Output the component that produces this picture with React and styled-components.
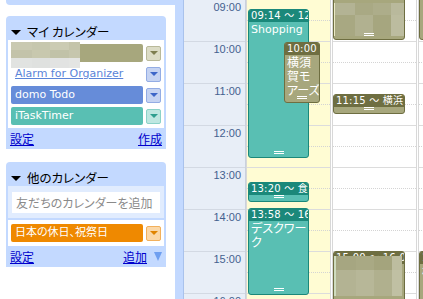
import styled, { createGlobalStyle } from "styled-components";

const GlobalStyle = createGlobalStyle`
  html, body { margin: 0; padding: 0; background: #fff; }
  body {
    width: 423px;
    height: 299px;
    overflow: hidden;
    font-family: "DejaVu Sans", "Noto Sans CJK JP", sans-serif;
    font-feature-settings: "palt";
  }
  #root { height: 299px; }
`;

const BLUE = "#c3d9ff";

const palette = {
  olive: { bar: "#a7a77d", tint: "#dcdcc6", edge: "#b9b99a", mark: "#7e7e50", dark: "#6e6e41" },
  blue: { bar: "#668cd9", tint: "#c5d3f2", edge: "#93ace4", mark: "#3d66c8", dark: "#3d66c8" },
  teal: { bar: "#59bfb3", tint: "#bfe7e1", edge: "#8bd2c8", mark: "#2f9e8f", dark: "#1b887a" },
  orange: { bar: "#ef8900", tint: "#fbd8a8", edge: "#f2b05c", mark: "#e08400", dark: "#c86e00" },
};

const Page = styled.div`
  display: flex;
  height: 299px;
  overflow: hidden;
`;

const Sidebar = styled.div`
  width: 175px;
  flex: none;
  display: flex;
  flex-direction: column;
`;

const TopCap = styled.div`
  margin-left: 6px;
  height: 5px;
  background: ${BLUE};
  border-bottom-left-radius: 4px;
`;

const Box = styled.div`
  margin: ${(p) => p.$mt}px 0 0 6px;
  width: 160px;
  background: ${BLUE};
  border-radius: 4px 4px 0 0;
`;

const BoxHead = styled.div`
  height: 24px;
  box-sizing: border-box;
  padding: 7px 0 0 5px;
  display: flex;
  align-items: center;
  gap: 6px;
  font-size: 12.5px;
  line-height: 16px;
  color: #000;
  font-family: "Noto Sans CJK JP", sans-serif;
`;

const Arrow = styled.span`
  width: 0;
  height: 0;
  border-left: 5px solid transparent;
  border-right: 5px solid transparent;
  border-top: 5px solid #000;
  margin-top: 2px;
`;

const List = styled.div`
  position: relative;
  margin: 0 2px;
  background: #fff;
  padding: 4px 3px ${(p) => p.$pb}px;
  display: flex;
  flex-direction: column;
  gap: 3px;
`;

const Row = styled.div`
  display: flex;
  align-items: center;
  gap: 3px;
  height: 18px;
`;

const Bar = styled.div`
  width: 132px;
  height: 18px;
  box-sizing: border-box;
  padding-left: 4px;
  border-radius: 2px;
  background: ${(p) => (p.$plain ? "transparent" : palette[p.$c].bar)};
  color: ${(p) => (p.$plain ? "#5b84d8" : "#fff")};
  text-decoration: ${(p) => (p.$plain ? "underline" : "none")};
  font-size: 11px;
  line-height: 18px;
  white-space: nowrap;
  overflow: hidden;
`;

const Drop = styled.div`
  width: 15px;
  height: 15px;
  box-sizing: border-box;
  border: 1px solid ${(p) => palette[p.$c].edge};
  border-radius: 2px;
  background: ${(p) => palette[p.$c].tint};
  display: flex;
  align-items: center;
  justify-content: center;

  &::after {
    content: "";
    border-left: 4px solid transparent;
    border-right: 4px solid transparent;
    border-top: 4px solid ${(p) => palette[p.$c].mark};
  }
`;

const Foot = styled.div`
  height: 21px;
  padding: 0 4px;
  display: flex;
  align-items: center;
  justify-content: space-between;
`;

const FootLink = styled.a`
  color: #0000cc;
  text-decoration: underline;
  font-size: 12px;
  font-family: "Noto Sans CJK JP", sans-serif;
  display: flex;
  align-items: center;
  gap: 7px;
`;

const MoreArrow = styled.span`
  border-left: 4px solid transparent;
  border-right: 4px solid transparent;
  border-top: 9px solid #6f9ff0;
  display: inline-block;
`;

const AddArea = styled.div`
  margin: 0 2px 2px;
  background: #e1ecfe;
  padding: 6px 4px 5px;
`;

const AddInput = styled.input`
  display: block;
  width: 100%;
  height: 21px;
  box-sizing: border-box;
  border: none;
  outline: none;
  padding: 0 4px;
  font-size: 12px;
  font-family: "Noto Sans CJK JP", sans-serif;
  font-feature-settings: "palt";
  background: #fff;
  &::placeholder { color: #8a8a8a; }
`;

const Strip = styled.div`
  width: 8px;
  flex: none;
  background: ${BLUE};
  border-right: 1px solid #a9c2ec;
`;

const TimeCol = styled.div`
  width: 61px;
  flex: none;
  background: #e8eef7;
  border-right: 1px solid #c9d1dd;
`;

const TimeCell = styled.div`
  height: 42px;
  box-sizing: border-box;
  border-bottom: 1px solid #d3d9e3;
  padding: 1px 4px 0 0;
  text-align: right;
  font-family: "Liberation Sans", Arial, sans-serif;
  font-size: 11px;
  line-height: 13px;
  color: #45618f;
`;

const DayCol = styled.div`
  position: relative;
  width: 83px;
  flex: none;
  background: ${(p) => (p.$today ? "#fffcd3" : "#fff")};
  border-left: ${(p) => (p.$today ? "1px solid #d8d8d8" : "3px double #d8d8d8")};
`;

const Slot = styled.div`
  position: relative;
  height: 42px;
  box-sizing: border-box;
  border-bottom: 1px solid #dcdcdc;

  &::before {
    content: "";
    position: absolute;
    left: 0;
    right: 0;
    top: 20px;
    border-top: 1px dotted #d4d4d4;
  }
`;

const Event = styled.div`
  position: absolute;
  box-sizing: border-box;
  border: 1px solid ${(p) => palette[p.$c].dark};
  border-radius: 3px;
  background: ${(p) => palette[p.$c].bar};
  color: #fff;
  overflow: hidden;
`;

const EventHead = styled.div`
  height: 12px;
  background: ${(p) => palette[p.$c].dark};
  padding-left: 2px;
  font-size: 10px;
  line-height: 12px;
  white-space: nowrap;
  overflow: hidden;
  letter-spacing: 0.2px;
`;

const EventBody = styled.div`
  padding: 1px 0 0 2px;
  font-size: ${(p) => (p.$cjk ? 12 : 11)}px;
  line-height: 14px;
  line-break: strict;
`;

const BodyLine = styled.div`
  white-space: nowrap;
`;

const Grip = styled.div`
  position: absolute;
  left: 50%;
  bottom: 3px;
  width: 10px;
  height: 1px;
  margin-left: -5px;
  border-top: 1px solid #fff;
  border-bottom: 1px solid #fff;
`;

const MosaicWrap = styled.svg`
  position: absolute;
  display: block;
`;

const Mosaic = ({ x, y, cells }) => (
  <MosaicWrap
    style={{ left: x, top: y }}
    width={Math.max(...cells.map((c) => c[0] + c[2]))}
    height={Math.max(...cells.map((c) => c[1] + c[3]))}
  >
    {cells.map(([cx, cy, w, h, fill], i) => (
      <rect key={i} x={cx} y={cy} width={w} height={h} fill={fill} />
    ))}
  </MosaicWrap>
);

const hours = ["09:00", "10:00", "11:00", "12:00", "13:00", "14:00", "15:00", "16:00"];

const CalEvent = ({ c, top, left, width, height, head, body, cjk, grip = true, children }) => (
  <Event $c={c} style={{ top, left, width, height }}>
    {head && <EventHead $c={c}>{head}</EventHead>}
    {body && (
      <EventBody $cjk={cjk}>
        {Array.isArray(body) ? body.map((l) => <BodyLine key={l}>{l}</BodyLine>) : body}
      </EventBody>
    )}
    {children}
    {grip && <Grip />}
  </Event>
);

const Slots = () => hours.map((h) => <Slot key={h} />);

export default function App() {
  return (
    <>
      <GlobalStyle />
      <Page>
        <Sidebar>
          <TopCap />
          <Box $mt={11}>
            <BoxHead>
              <Arrow />
              マイ カレンダー
            </BoxHead>
            <List $pb={3}>
              <Row>
                <Bar $c="olive">&nbsp;</Bar>
                <Drop $c="olive" />
              </Row>
              <Row>
                <Bar $plain>Alarm for Organizer</Bar>
                <Drop $c="blue" />
              </Row>
              <Row>
                <Bar $c="blue">domo Todo</Bar>
                <Drop $c="blue" />
              </Row>
              <Row>
                <Bar $c="teal">iTaskTimer</Bar>
                <Drop $c="teal" />
              </Row>
              <Mosaic
                x={3}
                y={2}
                cells={[
                  [0, 0, 21, 8, "#c9c9b1"],
                  [21, 0, 18, 8, "#c6c7ae"],
                  [39, 0, 19, 8, "#cbcbb3"],
                  [58, 0, 11, 8, "#c4c4aa"],
                  [0, 8, 21, 8, "#c3c3aa"],
                  [21, 8, 18, 8, "#c8c8ae"],
                  [39, 8, 19, 8, "#c1c2a8"],
                  [58, 8, 11, 8, "#c6c6ad"],
                  [0, 16, 21, 10, "#e1e3e1"],
                  [21, 16, 18, 10, "#dfe1df"],
                  [39, 16, 19, 10, "#e2e3e2"],
                  [58, 16, 11, 10, "#e4e5e3"],
                ]}
              />
            </List>
            <Foot>
              <FootLink>設定</FootLink>
              <FootLink>作成</FootLink>
            </Foot>
          </Box>
          <Box $mt={13}>
            <BoxHead>
              <Arrow />
              他のカレンダー
            </BoxHead>
            <AddArea>
              <AddInput placeholder="友だちのカレンダーを追加" />
            </AddArea>
            <List $pb={4}>
              <Row>
                <Bar $c="orange">日本の休日、祝祭日</Bar>
                <Drop $c="orange" />
              </Row>
            </List>
            <Foot>
              <FootLink>設定</FootLink>
              <FootLink>
                追加
                <MoreArrow />
              </FootLink>
            </Foot>
          </Box>
        </Sidebar>
        <Strip />
        <TimeCol>
          {hours.map((h) => (
            <TimeCell key={h}>{h}</TimeCell>
          ))}
        </TimeCol>
        <DayCol $today>
          <Slots />
          <CalEvent c="teal" top={9} left={1} width={61} height={149} head="09:14 ～ 12:45" body="Shopping" />
          <CalEvent c="olive" top={42} left={37} width={36} height={61} head="10:00" body={["横須", "賀モ", "アーズ"]} cjk />
          <CalEvent c="teal" top={182} left={1} width={61} height={20} head="13:20 ～ 食事" />
          <CalEvent c="teal" top={208} left={1} width={61} height={87} head="13:58 ～ 16:00" body="デスクワーク" cjk />
        </DayCol>
        <DayCol>
          <Slots />
          <CalEvent c="olive" top={-20} left={0} width={72} height={60}>
            <Mosaic
              x={-4}
              y={22}
              cells={[
                [0, 0, 5, 33, "#ecebc6"],
                [5, 0, 20, 12, "#b3b394"],
                [25, 0, 18, 12, "#a9a984"],
                [43, 0, 18, 12, "#adad8a"],
                [61, 0, 19, 12, "#b9b99c"],
                [5, 12, 20, 21, "#a8a882"],
                [25, 12, 18, 21, "#b1b190"],
                [43, 12, 18, 21, "#a6a67f"],
                [61, 12, 19, 21, "#bcbc9f"],
              ]}
            />
          </CalEvent>
          <CalEvent c="olive" top={94} left={0} width={72} height={20} head="11:15 ～ 横浜" />
          <CalEvent c="olive" top={251} left={0} width={72} height={70} head="15:00 ～ 16:00" grip={false}>
            <Mosaic
              x={-3}
              y={4}
              cells={[
                [0, 0, 5, 40, "#cfdcbf"],
                [5, 0, 20, 14, "#a6a681"],
                [25, 0, 18, 14, "#a9a984"],
                [43, 0, 18, 14, "#a4a47d"],
                [61, 0, 10, 14, "#bdbd9f"],
                [5, 14, 20, 26, "#b3b393"],
                [25, 14, 18, 26, "#b7b798"],
                [43, 14, 18, 26, "#b0b08e"],
                [61, 14, 10, 26, "#c0c0a3"],
              ]}
            />
          </CalEvent>
        </DayCol>
        <DayCol>
          <Slots />
          <CalEvent c="olive" top={-20} left={0} width={72} height={60} />
          <CalEvent c="olive" top={251} left={0} width={72} height={70} head="15:00" body="横浜" cjk grip={false} />
        </DayCol>
      </Page>
    </>
  );
}
